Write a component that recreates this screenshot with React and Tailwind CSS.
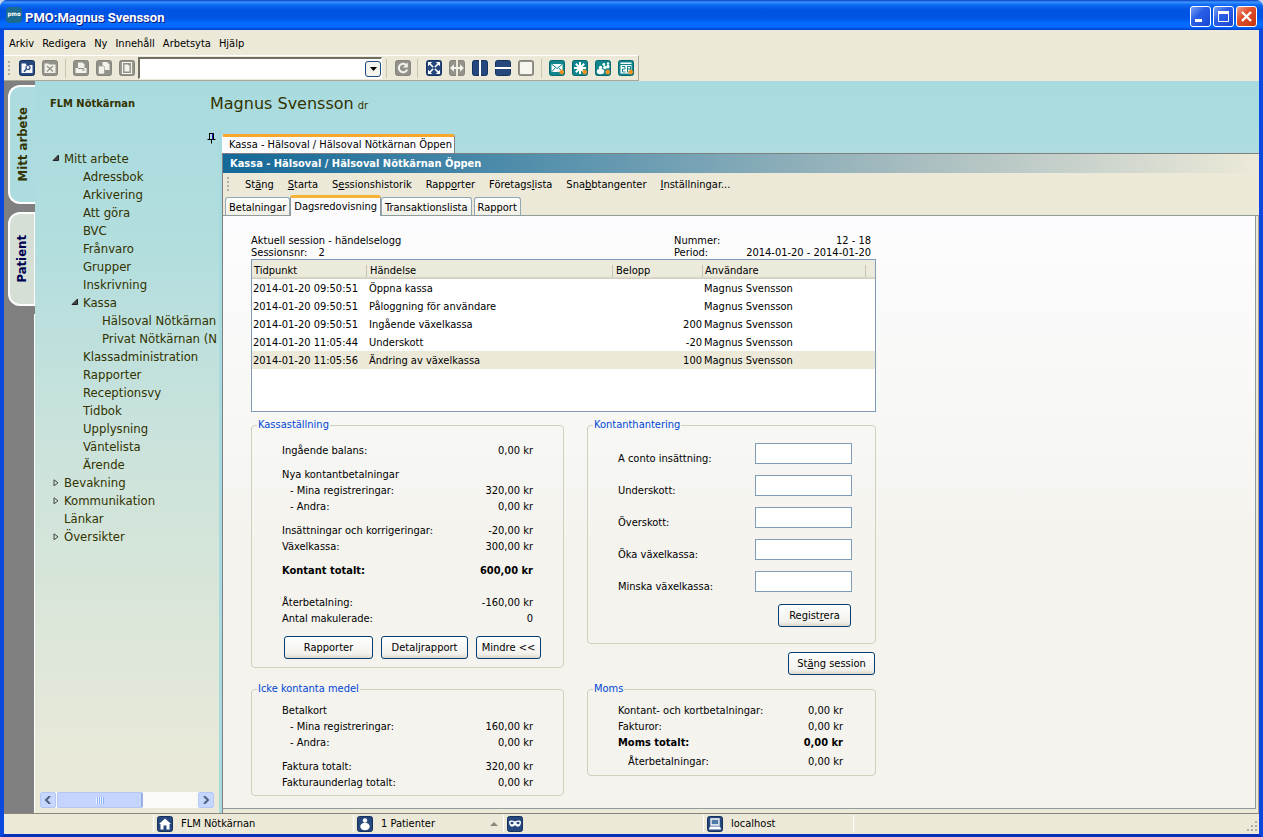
import clsx from 'clsx'

const events = [
  { time: '2014-01-20 09:50:51', text: 'Öppna kassa', amount: '', user: 'Magnus Svensson' },
  { time: '2014-01-20 09:50:51', text: 'Påloggning för användare', amount: '', user: 'Magnus Svensson' },
  { time: '2014-01-20 09:50:51', text: 'Ingående växelkassa', amount: '200', user: 'Magnus Svensson' },
  { time: '2014-01-20 11:05:44', text: 'Underskott', amount: '-20', user: 'Magnus Svensson' },
  { time: '2014-01-20 11:05:56', text: 'Ändring av växelkassa', amount: '100', user: 'Magnus Svensson' },
]

const tree = [
  { label: 'Mitt arbete', level: 0, open: true },
  { label: 'Adressbok', level: 1 },
  { label: 'Arkivering', level: 1 },
  { label: 'Att göra', level: 1 },
  { label: 'BVC', level: 1 },
  { label: 'Frånvaro', level: 1 },
  { label: 'Grupper', level: 1 },
  { label: 'Inskrivning', level: 1 },
  { label: 'Kassa', level: 1, open: true },
  { label: 'Hälsoval Nötkärnan', level: 2 },
  { label: 'Privat Nötkärnan (N', level: 2 },
  { label: 'Klassadministration', level: 1 },
  { label: 'Rapporter', level: 1 },
  { label: 'Receptionsvy', level: 1 },
  { label: 'Tidbok', level: 1 },
  { label: 'Upplysning', level: 1 },
  { label: 'Väntelista', level: 1 },
  { label: 'Ärende', level: 1 },
  { label: 'Bevakning', level: 0, open: false },
  { label: 'Kommunikation', level: 0, open: false },
  { label: 'Länkar', level: 0 },
  { label: 'Översikter', level: 0, open: false },
]

const indent = ['pl-4', 'pl-[35px]', 'pl-[54px]']

// [before, access key, after]
const commands = [
  ['St', 'ä', 'ng'],
  ['', 'S', 'tarta'],
  ['S', 'e', 'ssionshistorik'],
  ['Rapp', 'o', 'rter'],
  ['Företags', 'l', 'ista'],
  ['Sna', 'b', 'btangenter'],
  ['', 'I', 'nställningar...'],
]

const fields = [
  { id: 'aconto', label: 'A conto insättning:' },
  { id: 'underskott', label: 'Underskott:' },
  { id: 'overskott', label: 'Överskott:' },
  { id: 'oka', label: 'Öka växelkassa:' },
  { id: 'minska', label: 'Minska växelkassa:' },
]

function Tile({ color = 'navy', children }) {
  const fills = { navy: '#27487c', gray: '#92928a', teal: '#10858c' }
  const edges = { navy: '#16305f', gray: '#85857c', teal: '#07686f' }
  return (
    <svg width="16" height="16" viewBox="0 0 16 16" className="block shrink-0">
      <rect x="0.5" y="0.5" width="15" height="15" rx="2" fill={fills[color]} stroke={edges[color]} />
      {children}
    </svg>
  )
}

function ToolButton({ label, color, children }) {
  return (
    <button type="button" aria-label={label}>
      <Tile color={color}>{children}</Tile>
    </button>
  )
}

function Plus() {
  return <path d="M10.500 12h4.500M12.750 9.750v4.500" stroke="#f7931e" strokeWidth="2.600" />
}

function Divider({ className }) {
  return <span className={clsx('h-[19px] w-px bg-[#c8c5b2]', className)} />
}

function Grip() {
  return <span className="h-[15px] w-[2px] bg-[repeating-linear-gradient(#b0ad9f_0_2px,transparent_2px_4px)]" />
}

function Toolbar() {
  return (
    <div className="flex h-[26px] bg-[#ece9d8]">
      <div className="flex items-center border-t border-r border-b border-t-white border-r-[#aca899] border-b-[#aca899] pr-1 pl-1">
        <Grip />
        <div className="flex gap-[7px] pl-[9px]">
          <ToolButton label="Sök" color="navy">
            <path d="M2.500 3.500h4l1 1.500h6v8h-11z" fill="#f6f8fb" />
            <circle cx="9" cy="7.500" r="2" fill="none" stroke="#27487c" strokeWidth="1.200" />
            <path d="M7.500 9l-2.500 2.700" stroke="#27487c" strokeWidth="1.400" />
          </ToolButton>
          <ToolButton label="Stäng mapp" color="gray">
            <path d="M2.500 3.500h4l1 1h6v8.500h-11z" fill="#f2f0e6" />
            <path d="M5 6l6 5.500M11 6l-6 5.500" stroke="#92928a" strokeWidth="1.300" />
          </ToolButton>
        </div>
        <Divider className="mx-[7px]" />
        <div className="flex gap-[7px]">
          <ToolButton label="Skriv ut" color="gray">
            <path d="M5 2.500h4.500l2 2v4h-6.500z" fill="#f4f2ea" />
            <path d="M2.500 8h11v5h-11z" fill="#f4f2ea" />
            <path d="M5 8.500h6M9 10h3" stroke="#92928a" />
          </ToolButton>
          <ToolButton label="Kopiera" color="gray">
            <path d="M6.500 2h4.500l2.500 2.500v5.500h-7z" fill="#f4f2ea" />
            <path d="M2.500 6h5l1 1v7h-6z" fill="#f4f2ea" stroke="#92928a" strokeWidth="0.600" />
          </ToolButton>
          <ToolButton label="Dokument" color="gray">
            <path d="M3.500 2.500h9v11h-9z" fill="none" stroke="#f4f2ea" strokeWidth="1.200" />
            <path d="M5.500 4.500h3.500l1.500 1.500v5.500h-5z" fill="#f4f2ea" />
          </ToolButton>
        </div>
        <div className="ml-[3px] flex h-[22px] w-[244px] items-center border border-t-2 border-l-2 border-t-[#716f64] border-l-[#716f64] border-r-white border-b-white bg-white">
          <input aria-label="Sökfält" className="h-full min-w-0 flex-1 px-1 outline-none" />
          <button type="button" aria-label="Visa lista" className="flex h-4 w-4 items-center justify-center rounded-[3px] border border-[#1c4a7c] bg-[#f4f3ee]">
            <svg width="7" height="4" viewBox="0 0 7 4"><path d="M0 0h7l-3.500 4z" fill="#000" /></svg>
          </button>
        </div>
        <Divider className="mr-2 ml-1" />
        <ToolButton label="Uppdatera" color="gray">
          <path d="M11.500 5.200a4.300 4.300 0 1 0 .7 4.300" fill="none" stroke="#f4f2ea" strokeWidth="2" />
          <path d="M12.800 2.500v5h-5z" fill="#f4f2ea" />
        </ToolButton>
        <Divider className="mr-2 ml-[6px]" />
        <div className="flex gap-[7px]">
          <ToolButton label="Helskärm" color="navy">
            <path d="M3 3l10 10M13 3l-10 10" stroke="#fff" strokeWidth="1.600" />
            <path d="M2 2h4.200l-4.200 4.200zM14 2v4.200l-4.200-4.200zM2 14v-4.200l4.200 4.200zM14 14h-4.200l4.200-4.200z" fill="#fff" />
            <path d="M8 6.200l1.800 1.800l-1.800 1.800l-1.800-1.800z" fill="#27487c" />
          </ToolButton>
          <ToolButton label="Bredd" color="gray">
            <path d="M8 0v16" stroke="#ece9d8" strokeWidth="2" />
            <path d="M3 8h10" stroke="#f4f2ea" strokeWidth="2" />
            <path d="M1 8l4-3.800v7.600zM15 8l-4-3.800v7.600z" fill="#f4f2ea" />
          </ToolButton>
          <ToolButton label="Dela lodrätt" color="navy">
            <path d="M8 0v16" stroke="#fff" strokeWidth="2" />
          </ToolButton>
          <ToolButton label="Dela vågrätt" color="navy">
            <path d="M0 8h16" stroke="#fff" strokeWidth="2" />
          </ToolButton>
          <ToolButton label="Ett fönster" color="gray">
            <rect x="2" y="2" width="12" height="12" rx="1" fill="#f6f5ee" />
          </ToolButton>
        </div>
        <Divider className="mx-[7px]" />
        <div className="flex gap-[7px]">
          <ToolButton label="Nytt meddelande" color="teal">
            <path d="M2.500 4h11v8h-11z" fill="#fff" />
            <path d="M2.500 4l5.500 4.500l5.500-4.500M2.500 12l4-4.500M13.500 12l-4-4.500" fill="none" stroke="#10858c" />
            <Plus />
          </ToolButton>
          <ToolButton label="Ny bevakning" color="teal">
            <path d="M8 2v12M2 8h12M3.800 3.800l8.400 8.400M12.200 3.800l-8.400 8.400" stroke="#fff" strokeWidth="2" />
            <Plus />
          </ToolButton>
          <ToolButton label="Ny patient" color="teal">
            <circle cx="5.500" cy="7.500" r="1.700" fill="#fff" />
            <ellipse cx="5.500" cy="11.500" rx="3.700" ry="2.700" fill="#fff" />
            <circle cx="8.800" cy="4.500" r="1.400" fill="#fff" />
            <circle cx="13" cy="3.500" r="1.200" fill="#fff" />
            <ellipse cx="10" cy="7.500" rx="1.800" ry="1.800" fill="#fff" />
            <ellipse cx="13" cy="6.500" rx="1.500" ry="2" fill="#fff" />
            <Plus />
          </ToolButton>
          <ToolButton label="Ny bokning" color="teal">
            <path d="M2.500 2.500h11v11h-11z" fill="#fff" />
            <path d="M2 4.500h12" stroke="#10858c" />
            <path d="M4 6.500h3v2.500h-2.500v3h3M9.500 6.500h3v5.500h-3zM9.500 9h3" fill="none" stroke="#10858c" />
            <Plus />
          </ToolButton>
        </div>
      </div>
    </div>
  )
}

function TitleBar() {
  const button = 'flex h-[21px] w-[21px] items-center justify-center rounded-[3px] border border-white'
  const blue = 'bg-[linear-gradient(135deg,#7ba0f0,#2b5fe8_40%,#1846d0)]'
  return (
    <header className="flex h-[30px] items-center justify-between rounded-t-[7px] bg-[linear-gradient(#0a3fc0_0,#3c95ff_7%,#0e6af5_16%,#0054e3_32%,#0055e5_60%,#036bff_78%,#0468ff_90%,#0040c8_100%)] pr-[6px] pl-[6px]">
      <div className="flex items-center gap-[3px]">
        <svg width="16" height="16" viewBox="0 0 16 16">
          <rect width="16" height="16" rx="4" fill="#1c6a8e" />
          <text x="8" y="9" textAnchor="middle" fontSize="6" fontFamily="DejaVu Sans Condensed, sans-serif" fontWeight="bold" fill="#fff">pmo</text>
        </svg>
        <h1 className="pt-[5px] font-[Roboto,sans-serif] text-[13px] font-bold text-white [text-shadow:1px_1px_#0a1883]">PMO:Magnus Svensson</h1>
      </div>
      <div className="flex gap-[2px] pt-[3px]">
        <button type="button" aria-label="Minimera" className={clsx(button, blue)}>
          <svg width="19" height="19" viewBox="0 0 19 19"><path d="M4 12h7v3h-7z" fill="#fff" /></svg>
        </button>
        <button type="button" aria-label="Maximera" className={clsx(button, blue)}>
          <svg width="19" height="19" viewBox="0 0 19 19">
            <path d="M4.500 5.500h10v9h-10z" fill="none" stroke="#fff" />
            <path d="M4 4h11v3h-11z" fill="#fff" />
          </svg>
        </button>
        <button type="button" aria-label="Stäng" className={clsx(button, 'bg-[linear-gradient(135deg,#f0a08a,#e0502c_40%,#c8330c)]')}>
          <svg width="19" height="19" viewBox="0 0 19 19"><path d="M5 5l9 9M14 5l-9 9" stroke="#fff" strokeWidth="2.400" /></svg>
        </button>
      </div>
    </header>
  )
}

function TreeMarker({ open }) {
  if (open === undefined) return <span className="w-3" />
  return (
    <svg width="12" height="10" viewBox="0 0 12 10" className="shrink-0">
      {open ? <path d="M7.500 1v5.500h-5.500z" fill="#444" stroke="#222" /> : <path d="M3 1.800v6l4-3z" fill="none" stroke="#444" />}
    </svg>
  )
}

function Sidebar() {
  const arrow = 'flex h-4 w-4 items-center justify-center rounded-[2px] border border-[#b4c8f6] bg-[#c6d6fd]'
  return (
    <nav aria-label="Mitt arbete" className="flex w-[184px] shrink-0 flex-col">
      <div className="flex h-5 items-start justify-end pt-[2px] pr-[3px]">
        <svg width="9" height="12" viewBox="0 0 9 12">
          <path d="M2.500 1v6.500M6.500 1v6.500M2 1.500h5M0.500 7.500h8M4.500 8v3.500" fill="none" stroke="#000" />
          <path d="M5.500 1.500v6" stroke="#1a1ab0" />
        </svg>
      </div>
      <ul className="overflow-hidden text-[13px] leading-[18px] whitespace-nowrap text-[#333300]">
        {tree.map((node) => (
          <li key={node.label} className={clsx('flex items-center', indent[node.level])}>
            <TreeMarker open={node.open} />
            <a href="#" className="pl-px">{node.label}</a>
          </li>
        ))}
      </ul>
      <div className="mt-auto mb-[5px] ml-[5px] flex h-4 w-[174px] justify-between bg-[#fafaf7]">
        <div className="flex gap-px">
          <button type="button" aria-label="Rulla åt vänster" className={arrow}>
            <svg width="8" height="8" viewBox="0 0 8 8"><path d="M6 0l-4 4l4 4" fill="none" stroke="#4d6185" strokeWidth="2" /></svg>
          </button>
          <div className="flex h-4 w-[86px] items-center justify-center rounded-[2px] border border-r-2 border-[#b4c8f6] border-r-[#98b0e4] bg-[#c4d4fc]">
            <span className="h-[7px] w-2 bg-[repeating-linear-gradient(90deg,#eef4fe_0_1px,#8cb0f8_1px_2px)]" />
          </div>
        </div>
        <button type="button" aria-label="Rulla åt höger" className={arrow}>
          <svg width="8" height="8" viewBox="0 0 8 8"><path d="M2 0l4 4l-4 4" fill="none" stroke="#4d6185" strokeWidth="2" /></svg>
        </button>
      </div>
    </nav>
  )
}

function Group({ title, className, children }) {
  return (
    <fieldset className="rounded-[4px] border border-[#d0d0bf]">
      <legend className="ml-[5px] px-px leading-[14px] text-[#0046d5]">{title}</legend>
      <div className={clsx('pl-[30px]', className)}>{children}</div>
    </fieldset>
  )
}

function Row({ label, value, className }) {
  return (
    <div className={clsx('flex justify-between leading-4', className)}>
      <dt>{label}</dt>
      <dd>{value}</dd>
    </div>
  )
}

function PushButton({ className, children }) {
  return (
    <button
      type="button"
      className={clsx('h-[23px] rounded-[3px] border border-[#003c74] bg-[linear-gradient(#ffffff,#f2f1ec_80%,#dcd8ce)]', className)}
    >
      {children}
    </button>
  )
}

function EventTable() {
  const th = 'pt-[2px] text-left font-normal'
  const sep = 'flex h-3 items-center border-r border-[#c7c5b2]'
  return (
    <div className="h-[153px] border border-[#7f9db9] bg-white">
      <table className="w-full table-fixed border-collapse">
        <colgroup>
          <col className="w-[115px]" />
          <col className="w-[246px]" />
          <col className="w-[90px]" />
          <col />
        </colgroup>
        <thead className="h-[19px] bg-[linear-gradient(#ebeadb_85%,#cbc7b8)]">
          <tr>
            <th className={th}><span className={clsx(sep, 'pl-[2px]')}>Tidpunkt</span></th>
            <th className={th}><span className={clsx(sep, 'pl-[3px]')}>Händelse</span></th>
            <th className={th}><span className={clsx(sep, 'pl-[3px]')}>Belopp</span></th>
            <th className={clsx(th, 'pr-[9px]')}><span className={clsx(sep, 'pl-[2px]')}>Användare</span></th>
          </tr>
        </thead>
        <tbody>
          {events.map((e, i) => (
            <tr key={i} className={clsx('h-[18px]', i === 4 && 'bg-[#ece9d8]')}>
              <td className="pt-[2px] pl-px whitespace-nowrap">{e.time}</td>
              <td className="pt-[2px] pl-[2px]">{e.text}</td>
              <td className="pt-[2px] pr-px text-right">{e.amount}</td>
              <td className="pt-[2px] pl-px">{e.user}</td>
            </tr>
          ))}
        </tbody>
      </table>
    </div>
  )
}

function SessionView() {
  return (
    <section className="flex-1 border-r border-b border-[#919b9c] bg-[linear-gradient(#fcfcfe,#f8f8f6_30%,#f4f3ee_55%)] pt-[19px] pb-3 pl-7">
      <div className="w-[625px]">
        <div className="flex justify-between pr-[5px] leading-3">
          <div>
            <p>Aktuell session - händelselogg</p>
            <p>Sessionsnr: <span className="pl-2">2</span></p>
          </div>
          <dl className="w-[197px]">
            <div className="flex justify-between"><dt>Nummer:</dt><dd>12 - 18</dd></div>
            <div className="flex justify-between"><dt>Period:</dt><dd>2014-01-20 - 2014-01-20</dd></div>
          </dl>
        </div>
        <EventTable />

        <div className="mt-[6px] flex justify-between">
          <div className="flex w-[313px] flex-col gap-[14px]">
            <Group title="Kassaställning" className="pt-[11px] pb-2">
              <dl className="pr-[30px]">
                <Row label="Ingående balans:" value="0,00 kr" />
                <Row className="mt-2" label="Nya kontantbetalningar" value="" />
                <Row className="pl-2" label="- Mina registreringar:" value="320,00 kr" />
                <Row className="pl-2" label="- Andra:" value="0,00 kr" />
                <Row className="mt-2" label="Insättningar och korrigeringar:" value="-20,00 kr" />
                <Row label="Växelkassa:" value="300,00 kr" />
                <Row className="mt-2 font-bold" label="Kontant totalt:" value="600,00 kr" />
                <Row className="mt-4" label="Återbetalning:" value="-160,00 kr" />
                <Row label="Antal makulerade:" value="0" />
              </dl>
              <div className="mt-[9px] flex gap-2 pl-[2px]">
                <PushButton className="w-[89px]">Rapporter</PushButton>
                <PushButton className="w-[87px]">Detaljrapport</PushButton>
                <PushButton className="w-[65px]">Mindre &lt;&lt;</PushButton>
              </div>
            </Group>
            <Group title="Icke kontanta medel" className="pt-[7px] pb-1">
              <dl className="pr-[30px]">
                <Row label="Betalkort" value="" />
                <Row className="pl-2" label="- Mina registreringar:" value="160,00 kr" />
                <Row className="pl-2" label="- Andra:" value="0,00 kr" />
                <Row className="mt-2" label="Faktura totalt:" value="320,00 kr" />
                <Row label="Fakturaunderlag totalt:" value="0,00 kr" />
              </dl>
            </Group>
          </div>

          <div className="flex w-[289px] flex-col">
            <Group title="Kontanthantering" className="pt-[11px] pr-[23px] pb-4">
              {fields.map((f) => (
                <div key={f.id} className="flex h-8 items-start justify-between">
                  <label htmlFor={f.id} className="pt-2 leading-4">{f.label}</label>
                  <input id={f.id} className="h-[21px] w-[97px] border border-[#7f9db9] bg-white px-1 outline-none" />
                </div>
              ))}
              <div className="flex justify-end pt-px pr-px">
                <PushButton className="w-[73px]">Regist<u>r</u>era</PushButton>
              </div>
            </Group>
            <div className="flex justify-end pt-2 pr-px pb-[7px]">
              <PushButton className="w-[87px]">St<u>ä</u>ng session</PushButton>
            </div>
            <Group title="Moms" className="pt-[7px] pr-8 pb-[5px]">
              <dl>
                <Row label="Kontant- och kortbetalningar:" value="0,00 kr" />
                <Row label="Fakturor:" value="0,00 kr" />
                <Row className="font-bold" label="Moms totalt:" value="0,00 kr" />
                <Row className="mt-[3px] pl-[10px]" label="Återbetalningar:" value="0,00 kr" />
              </dl>
            </Group>
          </div>
        </div>
      </div>
    </section>
  )
}

function Tab({ active, children }) {
  return (
    <button
      type="button"
      role="tab"
      aria-selected={!!active}
      className={clsx(
        'rounded-t-[3px] border border-b-0 px-[3px] whitespace-nowrap',
        active
          ? 'mb-[-1px] h-[21px] border-t-[3px] border-[#919b9c] border-t-[#f9b233] bg-[#fcfcfe]'
          : 'h-[18px] border-[#91a7b4] bg-[linear-gradient(#ffffff,#f0efe6)] pt-[2px]'
      )}
    >
      {children}
    </button>
  )
}

function Workspace() {
  return (
    <main className="flex min-w-0 flex-1 flex-col">
      <div className="flex h-[19px]">
        <div className="rounded-t-[3px] border-t-[3px] border-r border-l border-t-[#f9a72b] border-r-[#808080] border-l-white bg-[#fcfcfe] pr-[2px] pl-[6px] leading-[15px]">
          Kassa - Hälsoval / Hälsoval Nötkärnan Öppen
        </div>
      </div>
      <div className="flex flex-1 flex-col border-t border-l border-[#808080] bg-[#ece9d8]">
        <h2 className="h-[19px] bg-[linear-gradient(90deg,#136898,#5a93ae_33%,#a6bcbf_66%,#ece9d8)] pl-[7px] leading-[19px] font-bold text-white">
          Kassa - Hälsoval / Hälsoval Nötkärnan Öppen
        </h2>
        <div className="flex h-[23px] items-center pl-1">
          <Grip />
          <div className="flex gap-[14px] pl-4">
            {commands.map(([a, key, b]) => (
              <button type="button" key={key + b}>{a}<u>{key}</u>{b}</button>
            ))}
          </div>
        </div>
        <div role="tablist" className="flex h-5 items-end border-b border-[#919b9c] pl-[2px]">
          <Tab>Betalningar</Tab>
          <Tab active>Dagsredovisning</Tab>
          <Tab>Transaktionslista</Tab>
          <span className="w-[2px]" />
          <Tab>Rapport</Tab>
        </div>
        <div className="flex flex-1 flex-col border-r border-[#aca899] pr-[2px] pb-1">
          <SessionView />
        </div>
      </div>
    </main>
  )
}

function StatusCell({ className, icon, children }) {
  return (
    <div className={clsx('flex h-[17px] items-center border-l border-white pl-[3px]', className)}>
      {icon}
      <span className="flex-1 pl-2">{children}</span>
    </div>
  )
}

function StatusBar() {
  return (
    <footer className="flex h-[21px] items-center border-t border-[#8a877a] bg-[#ece9d8] pb-px">
      <span className="w-[149px]" />
      <StatusCell
        className="w-[200px]"
        icon={<Tile><path d="M8 2.500l6 5.500h-1.500v5.500h-3v-4h-3v4h-3v-5.500h-1.500z" fill="#fff" /></Tile>}
      >
        FLM Nötkärnan
      </StatusCell>
      <StatusCell
        className="w-[150px]"
        icon={<Tile><circle cx="8" cy="4.500" r="2.200" fill="#fff" /><ellipse cx="8" cy="10.500" rx="4.700" ry="3.800" fill="#fff" /></Tile>}
      >
        <span className="flex items-center justify-between pr-[5px]">
          1 Patienter
          <svg width="8" height="4" viewBox="0 0 8 4"><path d="M0 4h8l-4-4z" fill="#8a877a" /></svg>
        </span>
      </StatusCell>
      <StatusCell
        className="w-[200px]"
        icon={
          <Tile>
            <path d="M2 6c0-2 4-2 6-.5c2-1.500 6-1.500 6 .5c0 5-4 6-6 3c-2 3-6 2-6-3z" fill="#fff" />
            <ellipse cx="5" cy="7" rx="1.600" ry="1.300" fill="#27487c" />
            <ellipse cx="11" cy="7" rx="1.600" ry="1.300" fill="#27487c" />
          </Tile>
        }
      />
      <StatusCell
        className="w-[150px]"
        icon={
          <Tile>
            <path d="M4 3h8v6h-8z" fill="#4f79a8" stroke="#fff" strokeWidth="1.300" />
            <path d="M3 10.500h10l1.200 3h-12.400z" fill="#fff" />
          </Tile>
        }
      >
        localhost
      </StatusCell>
      <StatusCell className="flex-1" />
      <svg width="12" height="12" viewBox="0 0 12 12" className="self-end">
        <path d="M8 0h2v2h-2zM4 4h2v2h-2zM8 4h2v2h-2zM0 8h2v2h-2zM4 8h2v2h-2zM8 8h2v2h-2z" fill="#b0ad9f" />
      </svg>
    </footer>
  )
}

function SideTabs() {
  const tab = 'flex items-center justify-center rounded-l-[12px] border-2 border-white'
  return (
    <div className="flex w-[31px] shrink-0 flex-col gap-2 bg-[#808080] pt-1 pl-1 text-[13px] font-bold">
      <button type="button" className={clsx(tab, 'h-[119px] border-r-0 bg-[#acdcdf] text-[#333300]')}>
        <span className="rotate-180 [writing-mode:vertical-rl]">Mitt arbete</span>
      </button>
      <button type="button" className={clsx(tab, 'h-[94px] border-r bg-[#d5dfd6] text-[#000050]')}>
        <span className="rotate-180 [writing-mode:vertical-rl]">Patient</span>
      </button>
      <div className="flex-1 border-r border-white" />
    </div>
  )
}

export default function App() {
  return (
    <div className="bg-[#c8d4e8] font-['DejaVu_Sans_Condensed','Noto_Sans',sans-serif] text-[11px] leading-[14px] text-black">
      <div className="flex min-h-screen flex-col rounded-t-[8px] bg-[#0a48e0]">
        <TitleBar />
        <div className="flex flex-1 flex-col border-x-4 border-b-4 border-x-[#0a48e0] border-b-[#0631b8]">
          <nav aria-label="Meny" className="flex h-[25px] items-center gap-2 bg-[#ece9d8] pt-[2px] pl-[5px]">
            {['Arkiv', 'Redigera', 'Ny', 'Innehåll', 'Arbetsyta', 'Hjälp'].map((item) => (
              <button type="button" key={item}>{item}</button>
            ))}
          </nav>
          <Toolbar />

          <div className="flex flex-1">
            <SideTabs />
            <div className="flex min-w-0 flex-1 flex-col bg-[linear-gradient(#a8dbdf,#b4dede_25%,#c8e2dc_46%,#d5e5d9_65%,#e8e9d9_92%,#ebe9d8)]">
              <div className="flex h-[49px] items-center pb-[3px] text-[#333300]">
                <p className="w-[175px] pl-[15px] font-bold">FLM Nötkärnan</p>
                <p className="flex items-baseline gap-1 font-['DejaVu_Sans',sans-serif] text-base">
                  Magnus Svensson
                  <span className="font-['DejaVu_Sans_Condensed',sans-serif] text-[11px]">dr</span>
                </p>
              </div>
              <div className="flex flex-1">
                <Sidebar />
                <div className="w-[3px] shrink-0 bg-[#a8dbdf]" />
                <div className="flex min-w-0 flex-1 flex-col pt-1">
                  <Workspace />
                </div>
              </div>
            </div>
          </div>

          <StatusBar />
        </div>
      </div>
    </div>
  )
}
